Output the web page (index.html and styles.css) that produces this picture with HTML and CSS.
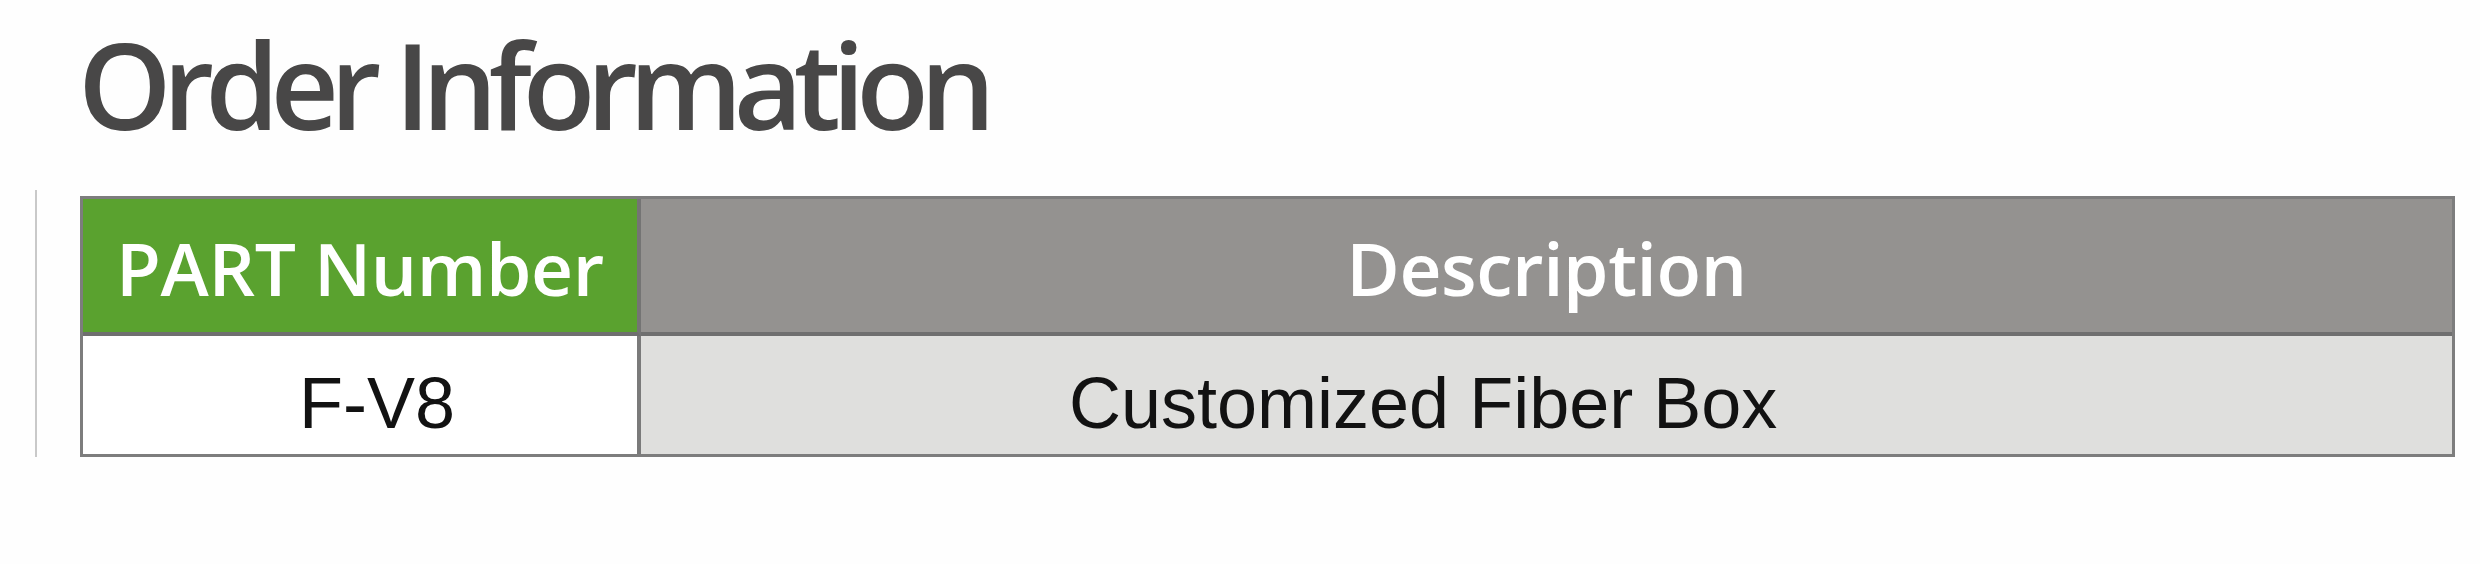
FILE: index.html
```html
<!DOCTYPE html>
<html lang="en">
<head>
<meta charset="utf-8">
<title>Order Information</title>
<link rel="stylesheet" href="styles.css">
</head>
<body>
<main class="page">
  <h1 class="title">Order Information</h1>
  <section class="table-wrap">
    <div class="order-table" role="table">
      <div class="cell head head-part" role="columnheader">PART Number</div>
      <div class="cell head head-desc" role="columnheader">Description</div>
      <div class="cell body body-part" role="cell">F-V8</div>
      <div class="cell body body-desc" role="cell">Customized Fiber Box</div>
    </div>
  </section>
</main>
</body>
</html>
```
FILE: styles.css
```css
html, body {
  margin: 0;
  padding: 0;
  background: #fefefe;
}

.page {
  width: 2480px;
  height: 564px;
  box-sizing: border-box;
  padding: 14px 0 0 35px;
}

.title {
  margin: 0 0 36px 43px;
  font-family: "Open Sans", "Noto Sans", sans-serif;
  font-weight: 600;
  font-size: 119px;
  line-height: 140px;
  letter-spacing: -8.9px;
  color: #484747;
}

.table-wrap {
  border-left: 2px solid #c9c9c9;
  padding: 6px 0 0 43px;
  width: 2375px;
}

.order-table {
  display: grid;
  grid-template-columns: 558px 1fr;
  grid-template-rows: 137px 118px;
  width: 2375px;
  box-sizing: border-box;
  border: 3px solid #7d7d7d;
}

.cell {
  box-sizing: border-box;
}

.head {
  font-family: "Open Sans", "Noto Sans", sans-serif;
  font-weight: 600;
  font-size: 73px;
  line-height: 133px;
  padding-top: 2px;
  color: #ffffff;
  text-align: center;
  border-bottom: 4px solid #6f6f6f;
  letter-spacing: -0.4px;
}

.head-part {
  background: #5aa22f;
  border-right: 4px solid #747474;
}

.head-desc {
  background: #949290;
}

.body {
  font-family: "Liberation Sans", Arial, sans-serif;
  font-size: 72px;
  line-height: 72px;
  padding-top: 31px;
  color: #121212;
}

.body-part {
  background: #ffffff;
  border-right: 4px solid #7a7a7a;
  text-align: center;
  padding-left: 34px;
}

.body-desc {
  background: #dfdfdd;
  padding-left: 428px;
}
```
